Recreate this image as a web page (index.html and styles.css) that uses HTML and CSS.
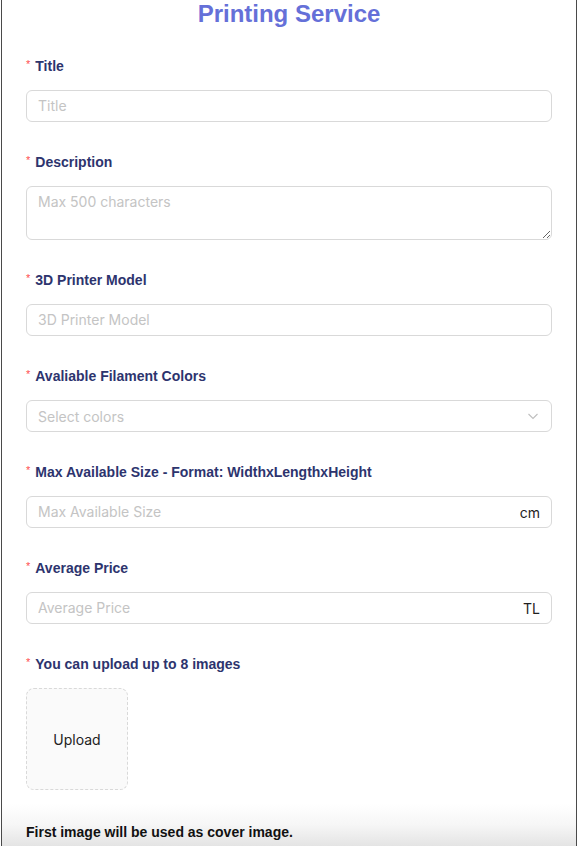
FILE: index.html
```html
<!DOCTYPE html>
<html>
<head>
<meta charset="utf-8">
<link rel="stylesheet" href="styles.css">
</head>
<body>
<div class="frame">
  <h1 class="title">Printing Service</h1>
  <form class="form">
    <div class="item">
      <div class="label"><span class="req">*</span>Title</div>
      <div class="input"><input type="text" placeholder="Title"></div>
    </div>
    <div class="item">
      <div class="label"><span class="req">*</span>Description</div>
      <textarea class="textarea" placeholder="Max 500 characters"></textarea>
    </div>
    <div class="item">
      <div class="label"><span class="req">*</span>3D Printer Model</div>
      <div class="input"><input type="text" placeholder="3D Printer Model"></div>
    </div>
    <div class="item">
      <div class="label"><span class="req">*</span>Avaliable Filament Colors</div>
      <div class="input select">
        <span class="ph">Select colors</span>
        <svg class="chev" width="12" height="12" viewBox="0 0 12 12"><path d="M1.5 4 L6 8.5 L10.5 4" fill="none" stroke="#bfbfbf" stroke-width="1.1"/></svg>
      </div>
    </div>
    <div class="item">
      <div class="label"><span class="req">*</span>Max Available Size - Format: WidthxLengthxHeight</div>
      <div class="input"><input type="text" placeholder="Max Available Size"><span class="suffix">cm</span></div>
    </div>
    <div class="item">
      <div class="label"><span class="req">*</span>Average Price</div>
      <div class="input"><input type="text" placeholder="Average Price"><span class="suffix">TL</span></div>
    </div>
    <div class="item last">
      <div class="label"><span class="req">*</span>You can upload up to 8 images</div>
      <div class="upload">Upload</div>
    </div>
  </form>
  <div class="footer">First image will be used as cover image.</div>
</div>
</body>
</html>
```
FILE: styles.css
```css
html, body { margin: 0; padding: 0; background: #fff; }
body { font-family: "Liberation Sans", Arial, sans-serif; }
.frame {
  margin-left: 1px;
  width: 576px;
  height: 846px;
  border-left: 1px solid #4a4a4a;
  border-right: 1px solid #4a4a4a;
  display: flex;
  flex-direction: column;
  box-sizing: border-box;
}
.title {
  margin: 0;
  height: 30px;
  font-size: 24px;
  line-height: 28px;
  font-weight: bold;
  color: #6570d8;
  text-align: center;
}
.form { padding: 25px 24px 0 24px; display: flex; flex-direction: column; }
.item { margin-bottom: 29px; }
.item.last { margin-bottom: 0; }
.label {
  height: 35px;
  font-size: 14px;
  line-height: 22px;
  font-weight: bold;
  color: #2d346e;
}
.req {
  color: #ff4d4f;
  font-family: "Liberation Sans", sans-serif;
  font-weight: normal;
  font-size: 11px;
  margin-right: 5px;
  position: relative;
  top: -3px;
}
.input {
  height: 32px;
  box-sizing: border-box;
  border: 1px solid #d9d9d9;
  border-radius: 6px;
  display: flex;
  align-items: center;
  padding: 0 11px;
  background: #fff;
}
.input input {
  flex: 1;
  border: 0;
  outline: none;
  padding: 0;
  font-family: Inter, "Noto Sans", sans-serif;
  font-size: 14px;
  color: #333;
  background: transparent;
  margin-top: -1px;
}
.input input::placeholder, .ph, .textarea::placeholder { color: #c4c4c4; }
.ph { flex: 1; font-family: Inter, "Noto Sans", sans-serif; font-size: 14px; }
.chev { margin-right: 1px; }
.suffix { font-family: Inter, "Noto Sans", sans-serif; font-size: 14px; color: #1f1f1f; }
.textarea {
  display: block;
  width: 100%;
  height: 54px;
  box-sizing: border-box;
  border: 1px solid #d9d9d9;
  border-radius: 6px;
  padding: 4px 11px;
  font-family: Inter, "Noto Sans", sans-serif;
  font-size: 14px;
  line-height: 22px;
  outline: none;
  resize: vertical;
}
.upload {
  width: 102px;
  height: 102px;
  box-sizing: border-box;
  border: 1px dashed #d9d9d9;
  border-radius: 8px;
  background: #fafafa;
  display: flex;
  align-items: center;
  justify-content: center;
  font-family: Inter, "Noto Sans", sans-serif;
  font-size: 14px;
  color: #222;
}
.footer {
  margin-top: auto;
  height: 42px;
  padding: 0 0 6px 24px;
  background: linear-gradient(to bottom, #ffffff 0%, #f6f6f6 50%, #e4e4e4 100%);
  font-size: 14px;
  font-weight: bold;
  color: #111;
  display: flex;
  align-items: flex-end;
  box-sizing: border-box;
}
```
